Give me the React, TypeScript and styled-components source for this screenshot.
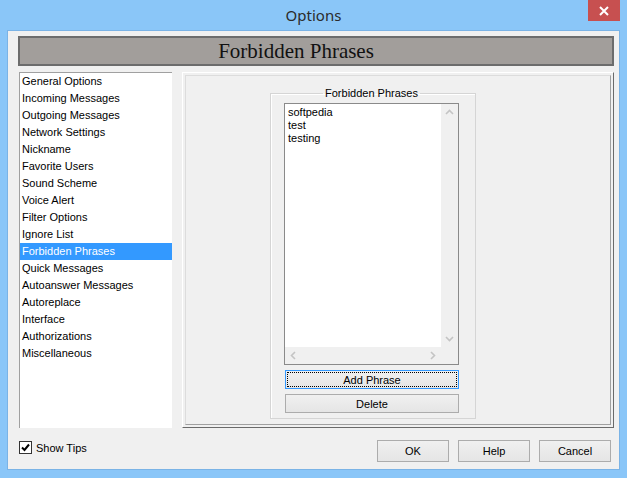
import React from 'react';
import styled, { createGlobalStyle } from 'styled-components';

const GlobalStyle = createGlobalStyle`
  html, body {
    margin: 0;
    padding: 0;
    background: #8ac6f8;
  }
  * {
    box-sizing: border-box;
  }
`;

const Window = styled.div`
  width: 627px;
  height: 478px;
  background: #8ac6f8;
  display: flex;
  flex-direction: column;
  font-family: 'Liberation Sans', Arial, sans-serif;
  font-size: 11px;
  color: #000;
`;

const TitleBar = styled.div`
  position: relative;
  height: 30px;
  flex-shrink: 0;
  display: flex;
  align-items: center;
  justify-content: center;
  font-family: 'Noto Sans', 'Open Sans', sans-serif;
  font-size: 15px;
  color: #2b2b2b;
  padding-bottom: 1px;
`;

const CloseButton = styled.div`
  position: absolute;
  top: 0;
  right: 7px;
  width: 32px;
  height: 21px;
  background: #c75050;
  display: flex;
  align-items: center;
  justify-content: center;
`;

const Client = styled.div`
  flex: 1;
  margin: 0 7px 8px 7px;
  border: 1px solid #7ab3e6;
  background: #f0f0f0;
  padding: 5px 5px 0 10px;
  display: flex;
  flex-direction: column;
`;

const Banner = styled.div`
  height: 30px;
  flex-shrink: 0;
  background: #a29e9b;
  border: 2px solid #6c6c6c;
  display: flex;
  align-items: center;
  justify-content: center;
  padding-right: 40px;
  font-family: 'Liberation Serif', 'Times New Roman', serif;
  font-size: 21px;
  color: #111;
`;

const MainRow = styled.div`
  margin-top: 6px;
  height: 356px;
  display: flex;
  gap: 10px;
`;

const PageList = styled.div`
  width: 153px;
  margin-left: 1px;
  background: #fff;
  border-left: 1px solid #a0a0a0;
  border-top: 1px solid #a0a0a0;
`;

const PageItem = styled.div<{ $selected?: boolean }>`
  height: 17px;
  line-height: 17px;
  padding-left: 2px;
  white-space: nowrap;
  background: ${p => (p.$selected ? '#3399ff' : 'transparent')};
  color: ${p => (p.$selected ? '#fff' : '#000')};
`;

const Panel = styled.div`
  flex: 1;
  display: flex;
  border: 1px solid;
  border-color: #ffffff #6a6a6a #6a6a6a #ffffff;
  padding: 2px;
`;

const PanelFrame = styled.div`
  flex: 1;
  display: flex;
  align-items: flex-start;
  border: 1px solid;
  border-color: #dcdcdc #a0a0a0 #a0a0a0 #dcdcdc;
`;

const Group = styled.fieldset`
  margin: 11px 0 0 84px;
  width: 206px;
  height: 332px;
  min-width: 0;
  padding: 3px 16px 5px 13px;
  border: 1px solid #d5d5d5;
  box-shadow: inset 1px 1px 0 #fff;
  display: flex;
  flex-direction: column;
`;

const GroupLabel = styled.legend`
  margin: 0 auto;
  padding: 0 2px;
  line-height: 13px;
  font-size: 11px;
`;

const ListBox = styled.div`
  flex: 1;
  border: 1px solid #8a8a8a;
  display: grid;
  grid-template-columns: 1fr 17px;
  grid-template-rows: 1fr 17px;
  background: #f0f0f0;
`;

const ListContent = styled.div`
  background: #fff;
  padding: 2px 3px;
`;

const Phrase = styled.div`
  line-height: 13px;
`;

const VScroll = styled.div`
  display: flex;
  flex-direction: column;
  justify-content: space-between;
`;

const HScroll = styled.div`
  display: flex;
  justify-content: space-between;
`;

const ArrowCell = styled.div`
  width: 17px;
  height: 17px;
  display: flex;
  align-items: center;
  justify-content: center;
`;

const PushButton = styled.button<{ $focused?: boolean }>`
  height: 19px;
  margin: 5px 0 0 1px;
  padding: 1px;
  font-family: 'Liberation Sans', Arial, sans-serif;
  font-size: 11px;
  color: #000;
  border: 1px solid ${p => (p.$focused ? '#3399ff' : '#acacac')};
  background: linear-gradient(#f0f0f0, #e5e5e5);
  display: flex;
  cursor: default;
`;

const FocusRect = styled.span<{ $focused?: boolean }>`
  flex: 1;
  display: flex;
  align-items: center;
  justify-content: center;
  outline: ${p => (p.$focused ? '1px dotted #000' : 'none')};
  outline-offset: -1px;
`;

const BottomRow = styled.div`
  margin-top: 12px;
  display: flex;
  align-items: flex-start;
  padding: 0 3px 0 1px;
`;

const CheckLabel = styled.label`
  display: flex;
  align-items: center;
  gap: 4px;
  margin-top: 1px;
  flex: 1;
`;

const CheckBox = styled.span`
  width: 13px;
  height: 13px;
  border: 1px solid #333;
  background: #fff;
  display: flex;
  align-items: center;
  justify-content: center;
`;

const DialogButtons = styled.div`
  display: flex;
  gap: 9px;
`;

const DialogButton = styled.button`
  width: 72px;
  height: 22px;
  padding: 0;
  font-family: 'Liberation Sans', Arial, sans-serif;
  font-size: 11px;
  color: #000;
  border: 1px solid #acacac;
  background: linear-gradient(#f0f0f0, #e5e5e5);
  cursor: default;
`;

const pages = [
  'General Options',
  'Incoming Messages',
  'Outgoing Messages',
  'Network Settings',
  'Nickname',
  'Favorite Users',
  'Sound Scheme',
  'Voice Alert',
  'Filter Options',
  'Ignore List',
  'Forbidden Phrases',
  'Quick Messages',
  'Autoanswer Messages',
  'Autoreplace',
  'Interface',
  'Authorizations',
  'Miscellaneous',
];

const phrases = ['softpedia', 'test', 'testing'];

const Chevron = ({ dir }: { dir: 'up' | 'down' | 'left' | 'right' }) => {
  const pts = {
    up: '1,6 4.5,2.5 8,6',
    down: '1,3 4.5,6.5 8,3',
    left: '6,1 2.5,4.5 6,8',
    right: '3,1 6.5,4.5 3,8',
  }[dir];
  return (
    <svg width="9" height="9" viewBox="0 0 9 9">
      <polyline points={pts} fill="none" stroke="#c4c4c4" strokeWidth="1.6" />
    </svg>
  );
};

export default function App() {
  return (
    <>
      <GlobalStyle />
      <Window>
        <TitleBar>
          Options
          <CloseButton>
            <svg width="10" height="10" viewBox="0 0 10 10">
              <path d="M1 1 L9 9 M9 1 L1 9" stroke="#fff" strokeWidth="2" />
            </svg>
          </CloseButton>
        </TitleBar>
        <Client>
          <Banner>Forbidden Phrases</Banner>
          <MainRow>
            <PageList>
              {pages.map(p => (
                <PageItem key={p} $selected={p === 'Forbidden Phrases'}>
                  {p}
                </PageItem>
              ))}
            </PageList>
            <Panel>
              <PanelFrame>
                <Group>
                  <GroupLabel>Forbidden Phrases</GroupLabel>
                  <ListBox>
                    <ListContent>
                      {phrases.map(p => (
                        <Phrase key={p}>{p}</Phrase>
                      ))}
                    </ListContent>
                    <VScroll>
                      <ArrowCell>
                        <Chevron dir="up" />
                      </ArrowCell>
                      <ArrowCell>
                        <Chevron dir="down" />
                      </ArrowCell>
                    </VScroll>
                    <HScroll>
                      <ArrowCell>
                        <Chevron dir="left" />
                      </ArrowCell>
                      <ArrowCell>
                        <Chevron dir="right" />
                      </ArrowCell>
                    </HScroll>
                    <div />
                  </ListBox>
                  <PushButton $focused>
                    <FocusRect $focused>Add Phrase</FocusRect>
                  </PushButton>
                  <PushButton>
                    <FocusRect>Delete</FocusRect>
                  </PushButton>
                </Group>
              </PanelFrame>
            </Panel>
          </MainRow>
          <BottomRow>
            <CheckLabel>
              <CheckBox>
                <svg width="11" height="11" viewBox="0 0 11 11">
                  <path d="M2 5.5 L4.5 8 L9 2.5" fill="none" stroke="#000" strokeWidth="2" />
                </svg>
              </CheckBox>
              Show Tips
            </CheckLabel>
            <DialogButtons>
              <DialogButton>OK</DialogButton>
              <DialogButton>Help</DialogButton>
              <DialogButton>Cancel</DialogButton>
            </DialogButtons>
          </BottomRow>
        </Client>
      </Window>
    </>
  );
}
